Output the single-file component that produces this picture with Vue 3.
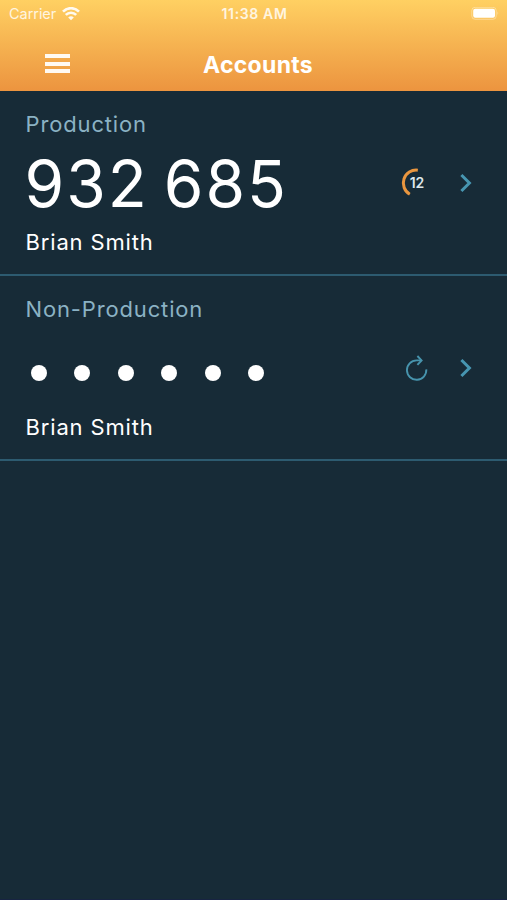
<script setup>
const accounts = [
  { label: 'Production', code: '932 685', owner: 'Brian Smith', seconds: 12 },
  { label: 'Non-Production', code: null, owner: 'Brian Smith' },
]
</script>

<template>
  <div class="screen">
    <header class="header">
      <div class="status">
        <div class="carrier">
          <span class="carrier-name">Carrier</span>
          <svg class="wifi" width="18" height="14" viewBox="0 0 18 14" fill="none" stroke="#fffaf0" stroke-width="2.7">
            <path d="M1 4.6C5.6 .1 12.4 .1 17 4.6" />
            <path d="M3.8 7.9C6.8 5 11.2 5 14.2 7.9" />
            <path d="M6.2 10.5C8 8.9 10 8.9 11.8 10.5L9 13.2Z" fill="#fffaf0" stroke="none" />
          </svg>
        </div>
        <span class="time">11:38 AM</span>
        <div class="battery-wrap">
          <svg class="battery" width="29" height="14" viewBox="0 0 29 14">
            <rect x=".8" y=".3" width="24.4" height="12" rx="3.3" fill="none" stroke="#fff" stroke-opacity=".35" />
            <rect x="2.2" y="1.8" width="21.8" height="9" rx="2" fill="#fff" />
            <path d="M26.5 4.3Q28.3 6.3 26.5 8.3Z" fill="#fff" fill-opacity=".4" />
          </svg>
        </div>
      </div>
      <div class="nav">
        <div class="menu"><i></i><i></i><i></i></div>
        <h1 class="title">Accounts</h1>
      </div>
    </header>

    <section v-for="a in accounts" :key="a.label" class="account">
      <div class="label">{{ a.label }}</div>
      <div class="row">
        <div v-if="a.code" class="code">{{ a.code }}</div>
        <div v-else class="dots"><i v-for="n in 6" :key="n"></i></div>
        <svg v-if="a.seconds" class="action" width="32" height="32" viewBox="0 0 32 32">
          <path d="M17.8 3.2A12.9 12.9 0 0 0 9.8 27.2" fill="none" stroke="#e9963f" stroke-width="3" />
          <text x="17" y="21.4" text-anchor="middle" class="seconds">{{ a.seconds }}</text>
        </svg>
        <svg v-else class="action" width="32" height="32" viewBox="0 0 32 32" fill="none" stroke="#4794ad" stroke-width="1.9">
          <path d="M26.3 17.4A9.7 9.7 0 1 1 16.6 8.4H21.4" />
          <path d="M17.4 4L21.6 8.4L17.4 12.8" />
        </svg>
        <svg class="chevron" width="14" height="20" viewBox="0 0 14 20" fill="none" stroke="#4796b1" stroke-width="3">
          <path d="M2.4 2L10.4 10L2.4 18" />
        </svg>
      </div>
      <div class="owner">{{ a.owner }}</div>
    </section>
  </div>
</template>

<style>
body {
  background: #172b37;
}
</style>

<style scoped>
.screen {
  width: 507px;
  height: 900px;
  box-sizing: border-box;
  overflow: hidden;
  background: #172b37;
  border-bottom: 1px solid #172442;
  font-family: Inter, "Liberation Sans", sans-serif;
  color: #fff;
}
.header {
  height: 91px;
  background: linear-gradient(#ffd062, #ec943f);
}
.status {
  display: grid;
  grid-template-columns: 1fr auto 1fr;
  height: 27px;
  align-items: center;
  padding: 0 7px 0 9px;
  color: #fff5e0;
}
.carrier {
  display: flex;
  align-items: center;
  gap: 6px;
}
.carrier-name {
  font-size: 14.5px;
  letter-spacing: -0.05px;
}
.wifi {
  display: block;
}
.time {
  font-size: 14px;
  font-weight: 600;
  letter-spacing: 0.65px;
}
.battery-wrap {
  display: flex;
  justify-content: flex-end;
}
.nav {
  display: grid;
  grid-template-columns: 70px 1fr 70px;
  height: 64px;
  align-items: center;
}
.menu {
  display: flex;
  flex-direction: column;
  gap: 3.5px;
  padding-left: 45px;
  padding-top: 9px;
}
.menu i {
  height: 4px;
  background: #fffaf3;
}
.title {
  margin: 11px 0 0 9px;
  text-align: center;
  font-size: 23px;
  line-height: 28px;
  font-weight: 700;
  letter-spacing: 0.3px;
}
.account {
  height: 185px;
  box-sizing: border-box;
  padding: 19px 34px 0 25.5px;
  border-bottom: 2px solid #2d5b70;
}
.label,
.owner {
  font-size: 22px;
  line-height: 28px;
  letter-spacing: 0.85px;
}
.label {
  color: #8bb2c4;
}
.row {
  display: flex;
  align-items: center;
  height: 90px;
}
.code {
  flex: 1;
  margin-left: -1px;
  font-size: 64px;
  line-height: 90px;
  letter-spacing: 2px;
  word-spacing: -5px;
  padding-top: 2px;
}
.dots {
  flex: 1;
  display: flex;
  gap: 27.6px;
  padding: 10px 0 0 5px;
}
.dots i {
  width: 16px;
  height: 16px;
  border-radius: 50%;
  background: #fff;
}
.seconds {
  font-size: 14px;
  font-weight: 600;
  fill: #dde7ec;
}
.chevron {
  margin-left: 27px;
}
</style>
